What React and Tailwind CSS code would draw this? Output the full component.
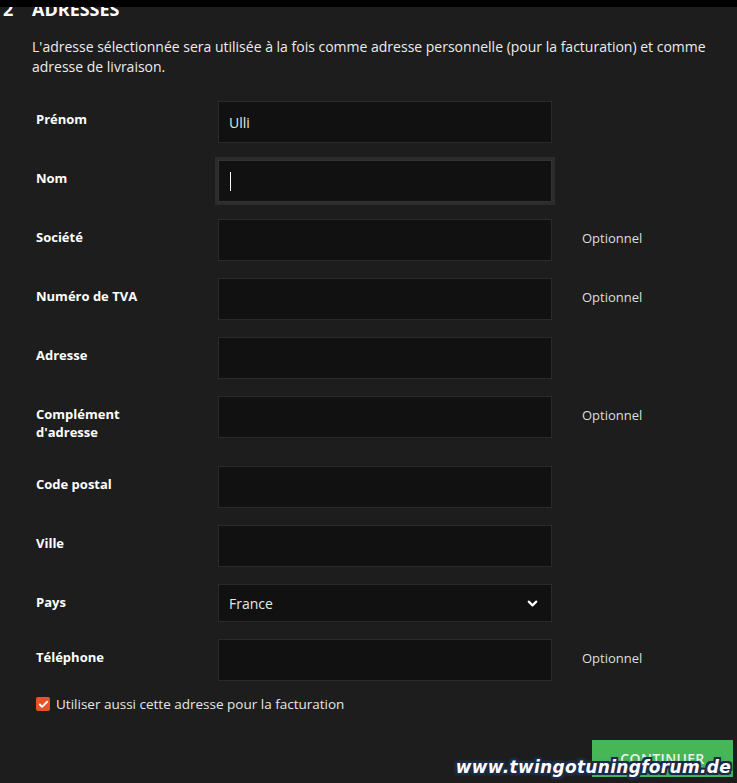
import { ChevronDown, Check } from "lucide-react";

const fields = [
  { label: "Prénom", value: "Ulli" },
  { label: "Nom", focused: true },
  { label: "Société", optional: true },
  { label: "Numéro de TVA", optional: true },
  { label: "Adresse" },
  { label: ["Complément", "d'adresse"], optional: true },
  { label: "Code postal" },
  { label: "Ville" },
  { label: "Pays", select: "France" },
  { label: "Téléphone", optional: true },
];

function Field({ field }) {
  const lines = Array.isArray(field.label) ? field.label : [field.label];
  return (
    <div className="flex items-start">
      <div className="w-[182px] pt-[9px] pb-[8px] text-[13px] leading-[18px] font-bold text-white">
        {lines.map((line) => (
          <div key={line}>{line}</div>
        ))}
      </div>
      {field.select ? (
        <div className="flex h-[38px] w-[334px] items-center justify-between border border-[#2a2a2a] bg-[#111111] pl-[10px] pr-[11px] text-[14px] text-[#e6e6e6]">
          <span>{field.select}</span>
          <ChevronDown size={15} strokeWidth={3.5} className="text-white" />
        </div>
      ) : (
        <div
          className={
            "flex h-[42px] w-[334px] items-center bg-[#111111] px-[10px] text-[14px] text-[#e6e6e6] " +
            (field.focused ? "border border-[#333333] shadow-[0_0_0_3px_#2c2c2c]" : "border border-[#2a2a2a]")
          }
        >
          {field.value}
          {field.focused && <span className="ml-[1px] h-[19px] w-px bg-white" />}
        </div>
      )}
      {field.optional && (
        <div className="ml-[30px] pt-[10px] text-[13px] leading-[18px] text-[#dedede]">Optionnel</div>
      )}
    </div>
  );
}

export default function App() {
  return (
    <div
      className="relative h-[783px] w-[737px] overflow-hidden bg-[#1d1d1d] text-white"
      style={{ fontFamily: '"Open Sans", "Liberation Sans", sans-serif' }}
    >
      <div className="absolute inset-x-0 top-0 h-[7px] bg-black" />

      <h2 className="flex text-[18px] leading-[18px] font-bold uppercase text-white">
        <span className="w-[32px] pl-[3px]">2</span>
        <span>Adresses</span>
      </h2>

      <p className="mt-[19px] whitespace-nowrap pl-[32px] text-[14px] leading-[20px] text-[#ececec]">
        L'adresse sélectionnée sera utilisée à la fois comme adresse personnelle (pour la facturation) et comme
        <br />
        adresse de livraison.
      </p>

      <div className="mt-[24px] flex flex-col gap-[17px] pl-[36px]">
        {fields.map((field) => (
          <Field key={String(field.label)} field={field} />
        ))}
      </div>

      <label className="mt-[13px] flex items-center gap-[6px] pl-[36px] text-[13.5px] text-[#e6e6e6]">
        <span className="flex h-[14px] w-[14px] items-center justify-center rounded-[2px] bg-[#e5532b]">
          <Check size={11} strokeWidth={4} className="text-white" />
        </span>
        Utiliser aussi cette adresse pour la facturation
      </label>

      <div className="mt-[26px] flex justify-end pr-[4px]">
        <button className="flex h-[37px] w-[141px] items-start justify-center bg-[#46b656] pt-[8px] text-[14px] font-semibold uppercase tracking-wide text-[#e8f5e9]">
          Continuer
        </button>
      </div>

      <div
        className="absolute bottom-[6px] right-[6px] text-[17px] leading-[20px] font-black italic tracking-[0.3px] text-white"
        style={{
          fontFamily: '"DejaVu Sans", sans-serif',
          textShadow:
            "-2px -2px 0 #1b2a46, 2px -2px 0 #1b2a46, -2px 2px 0 #1b2a46, 2px 2px 0 #1b2a46, 0 2px 0 #1b2a46, 0 -2px 0 #1b2a46, 2px 0 0 #1b2a46, -2px 0 0 #1b2a46, 0 0 4px #4a78b8",
        }}
      >
        www.twingotuningforum.de
      </div>
    </div>
  );
}
